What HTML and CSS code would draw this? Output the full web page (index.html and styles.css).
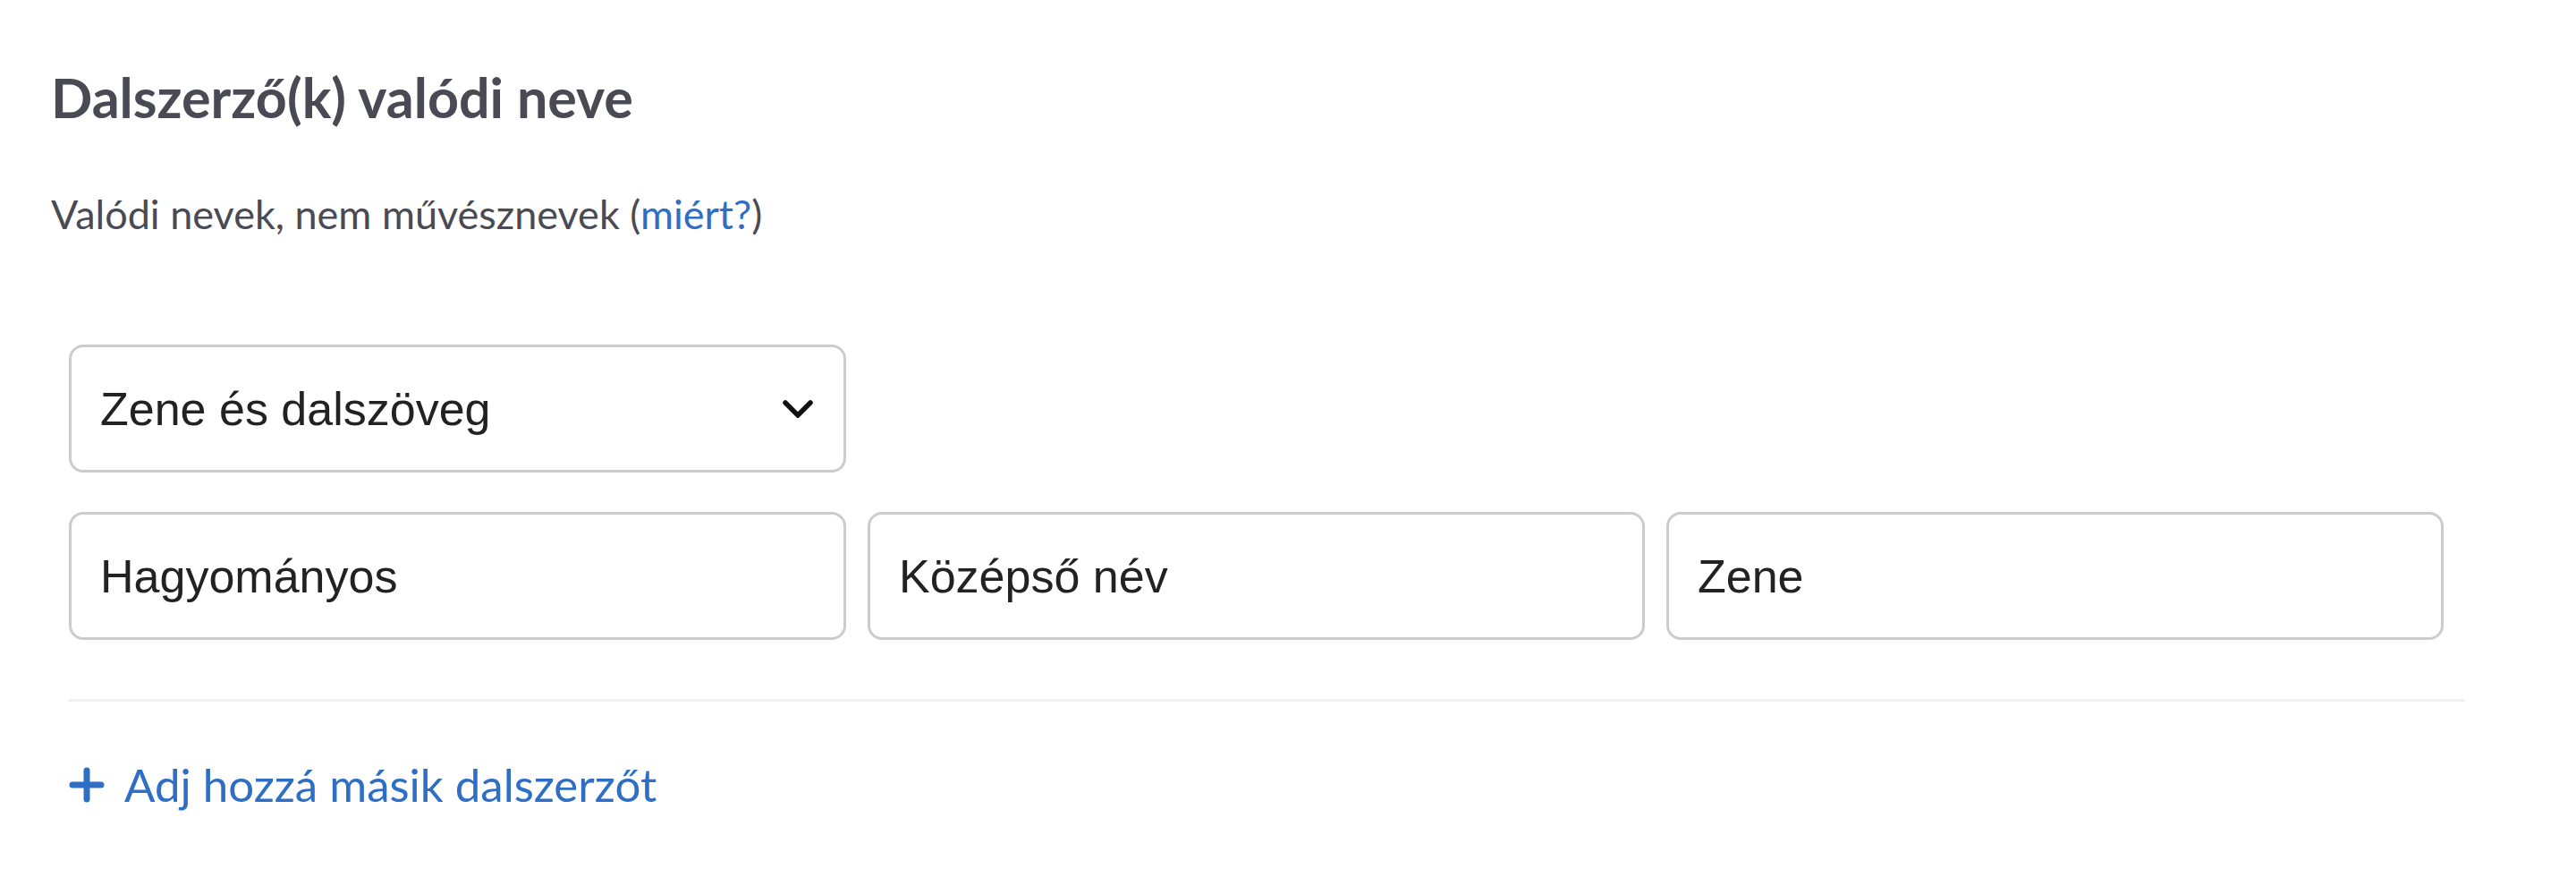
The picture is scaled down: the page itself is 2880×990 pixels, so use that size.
FILE: index.html
```html
<!DOCTYPE html>
<html lang="hu">
<head>
<meta charset="utf-8">
<title>Dalszerző(k) valódi neve</title>
<link rel="stylesheet" href="styles.css">
</head>
<body>
<section class="panel">
  <h2 class="title">Dalszerző(k) valódi neve</h2>
  <p class="subtitle">Valódi nevek, nem művésznevek (<a class="link" href="#">miért?</a>)</p>
  <div class="form">
    <div class="select">
      <span class="select-value">Zene és dalszöveg</span>
      <svg class="chevron" width="34" height="20" viewBox="0 0 34 20" aria-hidden="true">
        <path d="M3 3 L17 17 L31 3" fill="none" stroke="#111" stroke-width="5.5" stroke-linecap="round" stroke-linejoin="miter"/>
      </svg>
    </div>
    <div class="inputs">
      <div class="field">Hagyományos</div>
      <div class="field">Középső név</div>
      <div class="field">Zene</div>
    </div>
    <hr class="divider">
    <a class="add" href="#">
      <svg class="plus" width="40" height="40" viewBox="0 0 40 40" aria-hidden="true">
        <path d="M20 4 V36 M4 20 H36" fill="none" stroke="#2e6fc5" stroke-width="7" stroke-linecap="round"/>
      </svg>
      <span>Adj hozzá másik dalszerzőt</span>
    </a>
  </div>
</section>
</body>
</html>
```

FILE: styles.css
```css
html, body {
  margin: 0;
  padding: 0;
  background: #ffffff;
}

.panel {
  padding: 72px 0 0 57px;
  font-family: "Lato", "Open Sans", sans-serif;
  color: #4a4a54;
}

.title {
  margin: 0;
  font-size: 61px;
  line-height: 74px;
  font-weight: 700;
  color: #4a4a54;
}

.subtitle {
  margin: 66px 0 0 0;
  font-size: 45px;
  line-height: 54px;
  font-weight: 400;
  color: #4a4a54;
}

.link {
  color: #2e6fc5;
  text-decoration: none;
}

.form {
  margin: 119px 0 0 20px;
  width: 2678px;
}

.select {
  box-sizing: border-box;
  width: 869px;
  height: 143px;
  border: 3px solid #cccccc;
  border-radius: 16px;
  padding: 0 34px 0 32px;
  display: flex;
  align-items: center;
  justify-content: space-between;
  font-family: "Liberation Sans", Arial, sans-serif;
  font-size: 52px;
  color: #222222;
}

.chevron {
  display: block;
  flex: none;
}

.inputs {
  margin-top: 44px;
  display: flex;
  gap: 24px;
}

.field {
  box-sizing: border-box;
  width: 869px;
  height: 143px;
  border: 3px solid #cccccc;
  border-radius: 16px;
  padding: 0 32px;
  display: flex;
  align-items: center;
  font-family: "Liberation Sans", Arial, sans-serif;
  font-size: 52px;
  color: #222222;
}

.divider {
  margin: 66px 0 0 0;
  border: 0;
  height: 3px;
  background: #f1f2f5;
}

.add {
  margin-top: 62px;
  display: flex;
  align-items: center;
  gap: 22px;
  color: #2e6fc5;
  text-decoration: none;
  font-size: 51px;
  line-height: 62px;
}

.plus {
  display: block;
  flex: none;
}
```
